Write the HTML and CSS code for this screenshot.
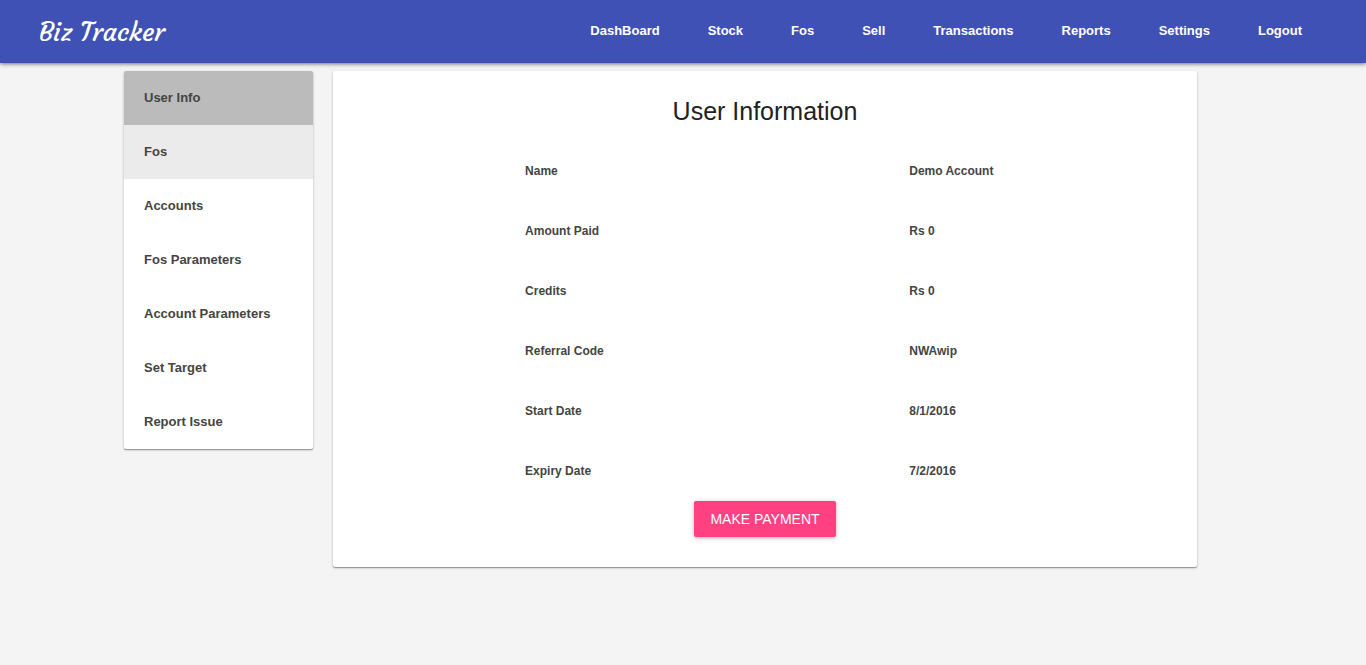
FILE: index.html
```html
<!DOCTYPE html>
<html lang="en">
<head>
<meta charset="utf-8">
<meta name="viewport" content="width=device-width, initial-scale=1">
<title>Biz Tracker</title>
<link rel="stylesheet" href="styles.css">
</head>
<body>
<header class="toolbar">
  <a class="brand" href="#">Biz Tracker</a>
  <nav class="menu" aria-label="Main">
    <a href="#">DashBoard</a>
    <a href="#">Stock</a>
    <a href="#">Fos</a>
    <a href="#">Sell</a>
    <a href="#">Transactions</a>
    <a href="#">Reports</a>
    <a href="#">Settings</a>
    <a href="#">Logout</a>
  </nav>
</header>
<div class="page">
  <nav class="sidebar card" aria-label="Settings">
    <a class="selected" href="#">User Info</a>
    <a class="hovered" href="#">Fos</a>
    <a href="#">Accounts</a>
    <a href="#">Fos Parameters</a>
    <a href="#">Account Parameters</a>
    <a href="#">Set Target</a>
    <a href="#">Report Issue</a>
  </nav>
  <main class="content card">
    <h1 class="title">User Information</h1>
    <table class="info">
      <tbody>
        <tr><th scope="row">Name</th><td>Demo Account</td></tr>
        <tr><th scope="row">Amount Paid</th><td>Rs 0</td></tr>
        <tr><th scope="row">Credits</th><td>Rs 0</td></tr>
        <tr><th scope="row">Referral Code</th><td>NWAwip</td></tr>
        <tr><th scope="row">Start Date</th><td>8/1/2016</td></tr>
        <tr><th scope="row">Expiry Date</th><td>7/2/2016</td></tr>
      </tbody>
    </table>
    <button class="pay" type="button">MAKE PAYMENT</button>
  </main>
</div>
</body>
</html>
```
FILE: styles.css
```css
* {
  box-sizing: border-box;
}

body {
  margin: 0;
  background: #f4f4f4;
  color: #212121;
  font-family: "Liberation Sans", Arial, sans-serif;
}

a {
  color: inherit;
  text-decoration: none;
}

.toolbar {
  display: flex;
  align-items: flex-start;
  justify-content: space-between;
  padding: 14px 64px 13px 39px;
  background: #3f51b5;
  color: #fff;
  box-shadow: 0 1px 4px rgba(0, 0, 0, 0.55);
}

.brand {
  font-family: Courgette, Lato, sans-serif;
  font-size: 26px;
  line-height: 36px;
}

.menu {
  display: flex;
  gap: 48px;
  font-size: 13px;
  font-weight: bold;
  line-height: 34px;
}

.page {
  display: grid;
  grid-template-columns: 189px 1fr;
  align-items: start;
  gap: 20px;
  padding: 8px 169px 16px 124px;
}

.card {
  background: #fff;
  border-radius: 2px;
  box-shadow: 0 1px 3px rgba(0, 0, 0, 0.2), 0 1px 1px rgba(0, 0, 0, 0.3);
}

.sidebar {
  display: flex;
  flex-direction: column;
  overflow: hidden;
  color: #444;
  font-size: 13px;
  font-weight: bold;
}

.sidebar a {
  padding: 0 20px;
  line-height: 54px;
}

.sidebar .selected {
  background: #bbb;
}

.sidebar .hovered {
  background: #ebebeb;
}

.content {
  display: flex;
  flex-direction: column;
  align-items: center;
  padding: 20px 0 30px;
}

.title {
  margin: 0;
  font-size: 25px;
  font-weight: normal;
  line-height: 40px;
}

.info {
  align-self: flex-end;
  width: 78%;
  margin: 10px 0 0;
  border-collapse: collapse;
  table-layout: fixed;
  color: #444;
  font-size: 12px;
  font-weight: bold;
  text-align: left;
}

.info th {
  width: 57%;
}

.info th,
.info td {
  height: 60px;
  padding: 0 0 0 2px;
}

.pay {
  height: 36px;
  padding: 0 16px;
  border: 0;
  border-radius: 2px;
  background: #ff4081;
  color: #fff;
  box-shadow: 0 1px 4px rgba(0, 0, 0, 0.3);
  font: 14px "Liberation Sans", Arial, sans-serif;
}
```
